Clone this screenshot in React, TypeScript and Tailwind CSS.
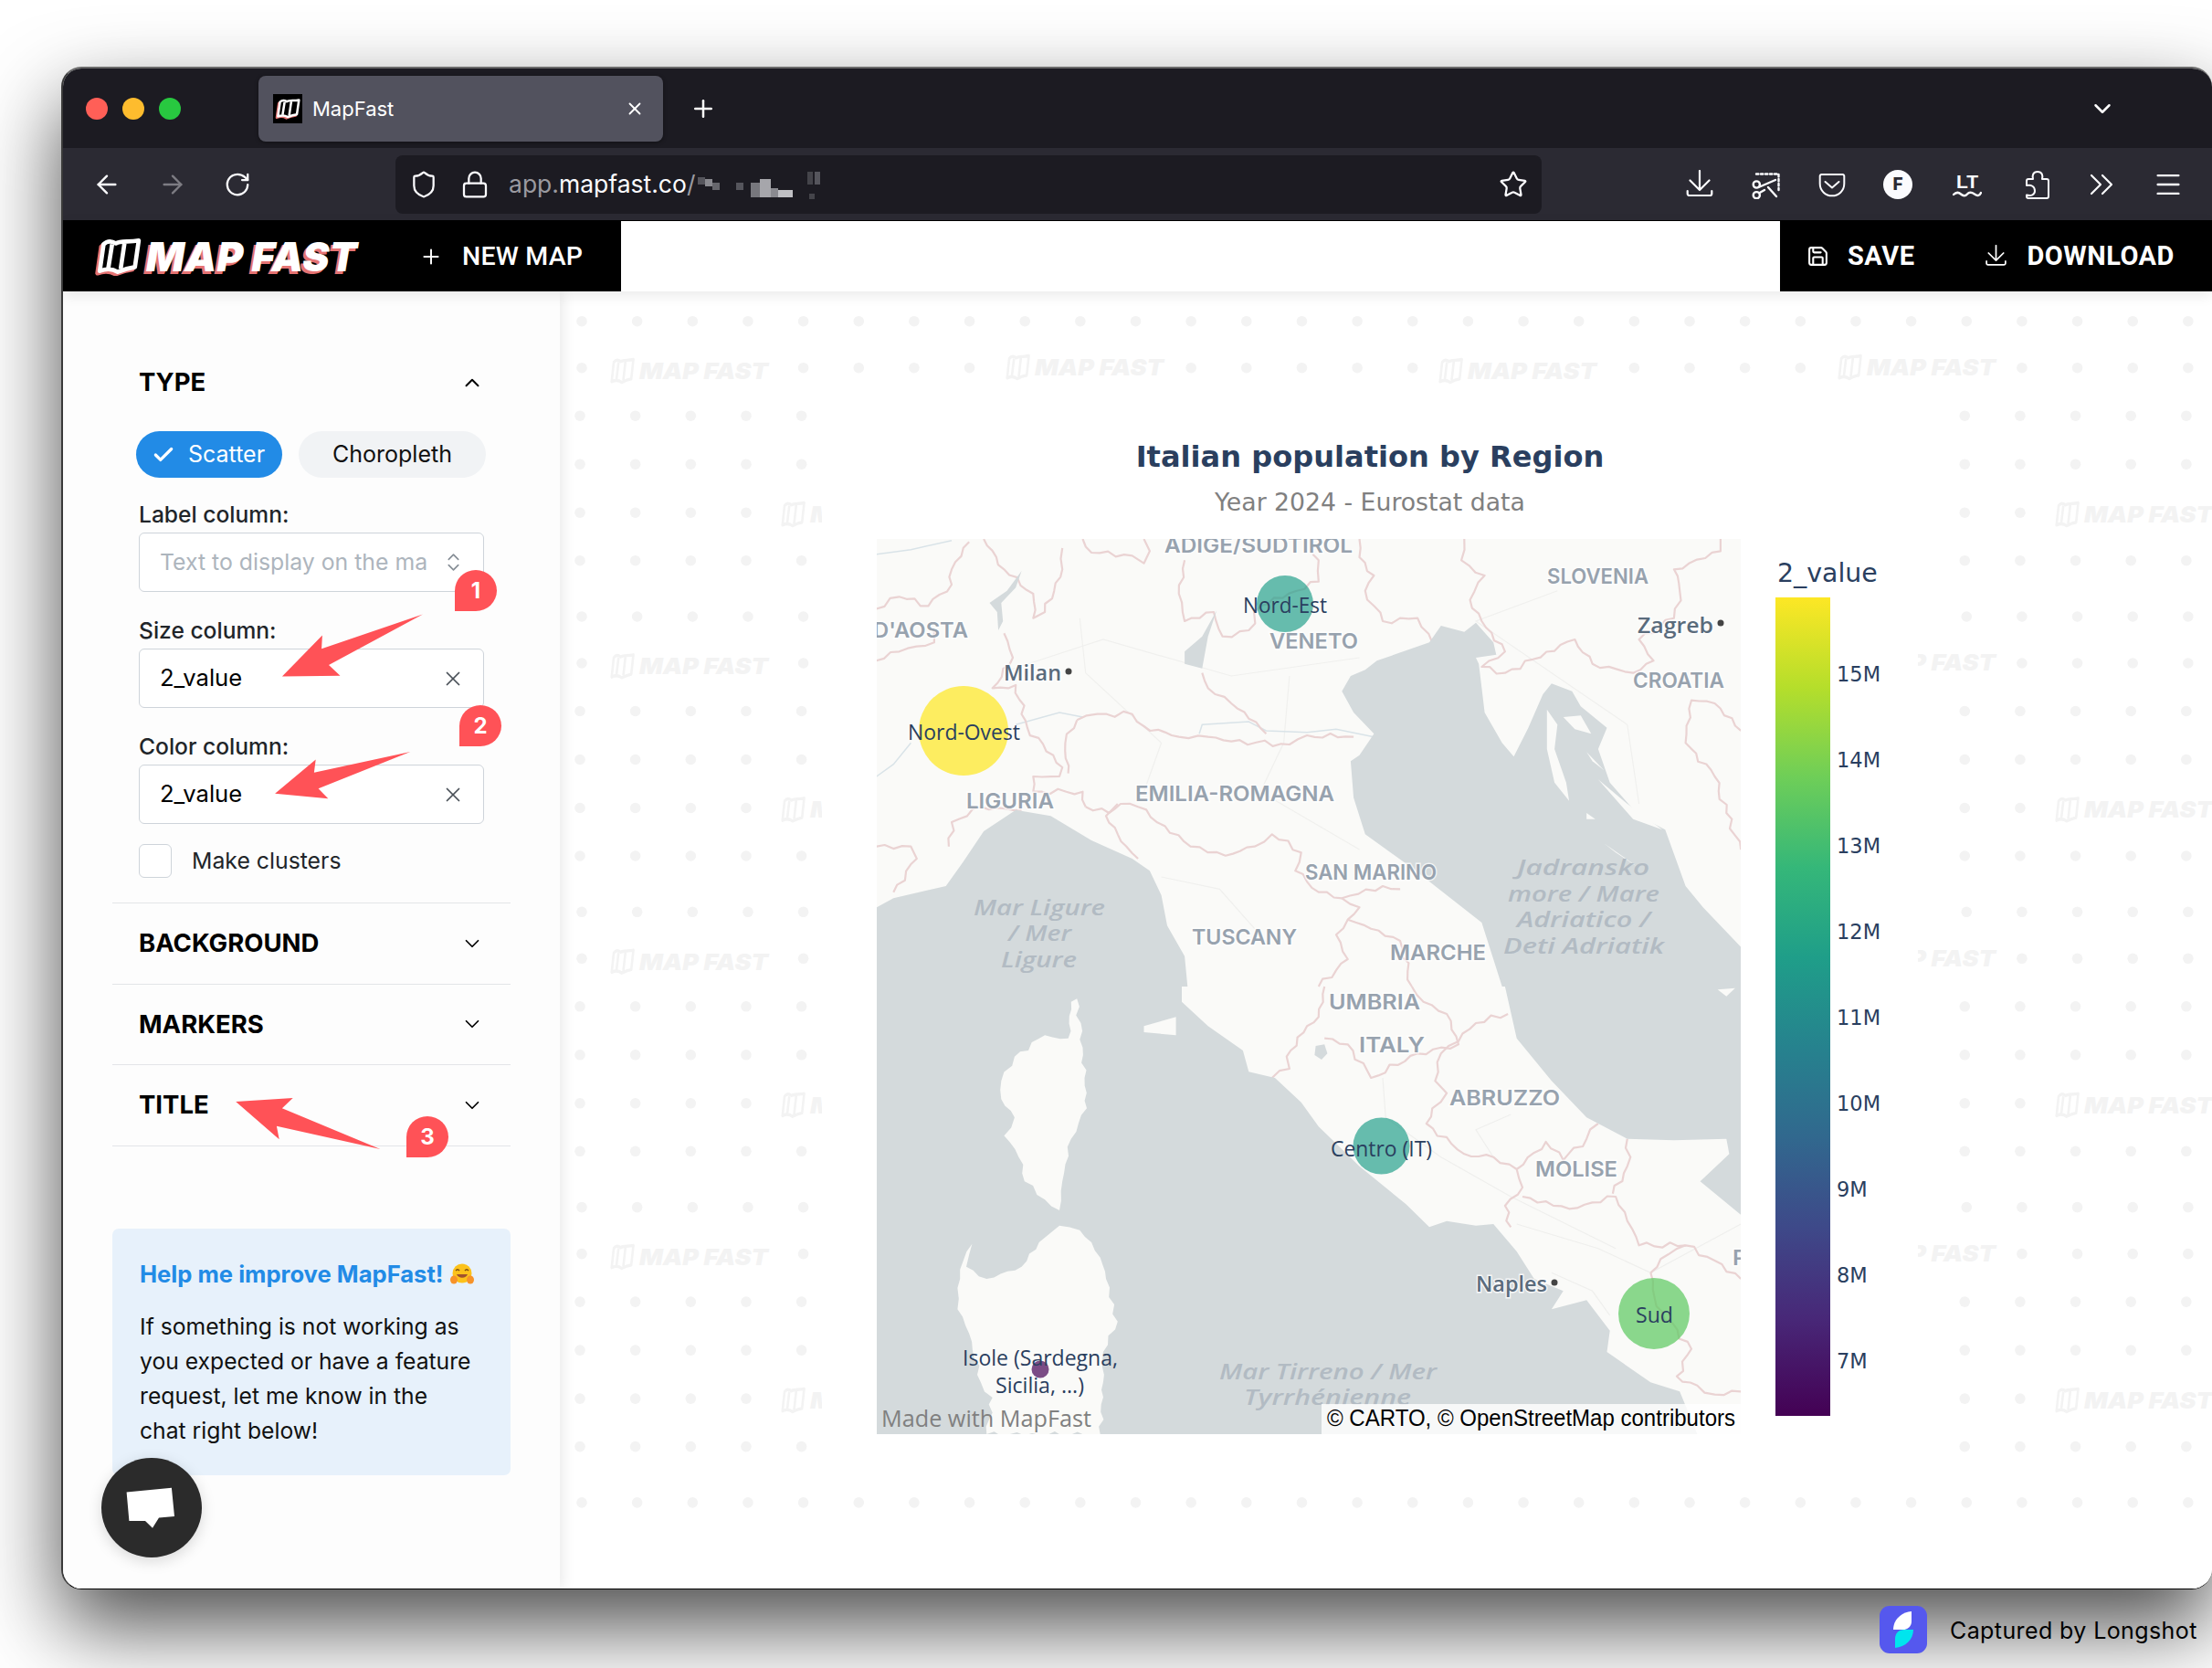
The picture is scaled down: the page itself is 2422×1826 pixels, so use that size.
import React from "react";
import { ArrowLeft, ArrowRight, RotateCw, Shield, Lock, Star, Menu, Plus, X, ChevronDown, ChevronUp, ChevronsUpDown, Check, Save } from "lucide-react";

const A5 = (pts: number[][]) => pts.map(([x, y]) => [940 + x / 1.568, 580 + y / 3]);
const A6 = (pts: number[][]) => pts.map(([x, y]) => [940 + x / 1.568, 1080 + y / 3]);
const S = (pts: number[][]) => pts.map(([x, y]) => `${x.toFixed(1)},${y.toFixed(1)}`).join(" ");
const P5 = (pts: number[][]) => S(A5(pts));
const P6 = (pts: number[][]) => S(A6(pts));
const Z3 = (pts: number[][]) => pts.map(([x, y]) => `${(60 + x / 2.8).toFixed(1)},${(380 + y / 2.529).toFixed(1)}`).join(" ");
const Z4 = (pts: number[][]) => pts.map(([x, y]) => `${(60 + x / 2.8).toFixed(1)},${(1000 + y / 2.063).toFixed(1)}`).join(" ");

// roughens a line: borders and island coasts on the base map are jagged
const jag = (pts: number[][], seed: number, amp = 1) => {
  const out: number[][] = [];
  pts.forEach((p, i) => {
    if (i === pts.length - 1) {
      out.push(p);
      return;
    }
    const q = pts[i + 1];
    const dx = q[0] - p[0];
    const dy = q[1] - p[1];
    const len = Math.hypot(dx, dy) || 1;
    const n = Math.max(1, Math.floor(len / 8));
    for (let k = 0; k < n; k++) {
      const t = k / n;
      const off = k === 0 ? 0 : amp * (2.4 * Math.sin(k * 2.3 + seed + i) + 1.1 * Math.cos(k * 4.7 + seed));
      out.push([p[0] + dx * t - (dy / len) * off, p[1] + dy * t + (dx / len) * off]);
    }
  });
  return S(out);
};

const adriatic =
  P5([[1000, 315], [980, 370], [890, 430], [870, 460], [845, 480], [830, 530], [850, 600], [885, 670], [860, 740], [845, 760], [850, 880], [870, 1000], [950, 1110], [1070, 1290], [1105, 1500]]) +
  " " +
  P6([[1110, 0], [1130, 170], [1190, 310], [1250, 430], [1320, 500], [1400, 505], [1490, 500], [1495, 550], [1445, 640], [1515, 750]]) +
  " " +
  P5([[1515, 1370], [1450, 1240], [1420, 1170], [1385, 985], [1340, 940], [1290, 830], [1270, 720], [1285, 650], [1240, 580], [1225, 530], [1190, 505], [1175, 540], [1150, 650], [1125, 745], [1105, 700], [1075, 600], [1070, 520], [1065, 440], [1060, 420], [1095, 410], [1090, 370], [1060, 305], [1040, 335]]);

const tyrrhenian =
  P5([[31, 1240], [60, 1210], [150, 1170], [180, 1090], [215, 990], [270, 920], [330, 940], [400, 1020], [470, 1080], [500, 1120], [520, 1200], [530, 1300], [560, 1400], [565, 1500]]) +
  " " +
  P6([[555, 0], [555, 50], [600, 130], [660, 210], [670, 280], [715, 300], [760, 380], [790, 460], [860, 590], [940, 715], [980, 790], [1010, 770], [1060, 785], [1090, 780], [1130, 870], [1160, 960], [1210, 1000], [1190, 1060], [1250, 1030], [1290, 1130], [1285, 1200], [1360, 1300], [1410, 1330], [1440, 1470], [31, 1470]]);

const islandPieces = [
  A6([[375, 40], [385, 200], [392, 400], [365, 500], [350, 640], [345, 735], [320, 700], [285, 640], [275, 560], [250, 490], [268, 430], [245, 370], [245, 310], [268, 230], [320, 160], [360, 170], [365, 50]]),
  A6([[345, 785], [380, 800], [400, 840], [415, 890], [425, 960], [430, 1020], [445, 1100], [420, 1200], [420, 1300], [415, 1470], [220, 1470], [230, 1350], [210, 1300], [190, 1140], [170, 1060], [170, 990], [180, 900], [195, 845], [190, 880], [185, 920], [220, 960], [280, 920], [310, 840]]),
];

const landPieces = [
  P6([[490, 130], [545, 100], [545, 160], [490, 150]]),
  P6([[1475, 10], [1505, 5], [1490, 32]]),
  P5([[1182, 590], [1200, 640], [1195, 720], [1215, 830], [1220, 890], [1195, 830], [1182, 720]]),
  P5([[1210, 615], [1240, 610], [1258, 670], [1230, 655]]),
  P5([[1250, 730], [1280, 790], [1260, 760]]),
  P5([[1270, 820], [1320, 900], [1380, 985], [1330, 950]]),
  P5([[1280, 1030], [1340, 1110], [1300, 1060]]),
  P5([[1250, 930], [1265, 950], [1250, 950]]),
];

const lakes = [
  P5([[615, 265], [590, 350], [560, 400], [560, 440], [590, 455], [600, 350]]),
  P5([[280, 135], [255, 200], [225, 240], [238, 270], [240, 330], [248, 300], [245, 240], [270, 190]]),
  P6([[785, 195], [800, 190], [805, 220], [795, 240], [783, 225]]),
];

const borders5 = [
  [[385, 30], [400, 75], [470, 85], [490, 110], [500, 70], [490, 30]],
  [[560, 100], [550, 210], [560, 300], [610, 270], [625, 350], [670, 330], [690, 250], [790, 170], [790, 100], [780, 80]],
  [[860, 30], [860, 90], [885, 150], [870, 200], [900, 300], [960, 290], [985, 370]],
  [[1040, 30], [1035, 100], [1075, 150], [1050, 230], [1070, 300], [1110, 400], [1070, 450], [1110, 470], [1230, 360], [1260, 440], [1330, 470], [1365, 430], [1340, 360], [1400, 290], [1410, 200], [1400, 130], [1480, 70], [1480, 30]],
  [[1515, 660], [1470, 570], [1430, 560], [1420, 700], [1470, 810], [1490, 930], [1515, 1050]],
  [[215, 30], [250, 130], [300, 210], [300, 290], [320, 270], [350, 130], [350, 60]],
  [[30, 260], [70, 220], [120, 250], [160, 180], [160, 130], [190, 40]],
  [[30, 430], [70, 400], [130, 370], [130, 330]],
  [[250, 340], [265, 420], [230, 520], [270, 510], [290, 650], [350, 780], [345, 810], [300, 810], [300, 860], [385, 860], [390, 910]],
  [[375, 625], [410, 605], [470, 605], [490, 645], [550, 680], [600, 680], [640, 695], [740, 705], [770, 675], [850, 680]],
  [[375, 625], [355, 700], [360, 800]],
  [[590, 470], [600, 520], [640, 570], [670, 620], [700, 670]],
  [[390, 910], [430, 930], [450, 900], [480, 910], [570, 1040], [630, 1070], [680, 1040], [710, 1000], [760, 1060], [750, 1120], [790, 1190], [830, 1210], [900, 1170], [930, 1180]],
  [[830, 1210], [860, 1240], [840, 1280], [820, 1330], [840, 1410], [790, 1500]],
  [[840, 1280], [880, 1310], [930, 1350], [950, 1500]],
  [[30, 1040], [90, 1040], [100, 1080], [60, 1190]],
  [[155, 1040], [160, 960], [210, 910], [280, 920]],
  [[445, 900], [425, 940], [460, 1040], [480, 1080]],
];
const borders6 = [
  [[800, 0], [790, 100], [770, 130], [735, 230], [740, 270], [710, 300]],
  [[800, 170], [840, 190], [880, 300], [960, 220], [1000, 200], [1030, 190], [1010, 90], [970, 50], [950, 0]],
  [[1115, 90], [1060, 120], [1030, 180], [1000, 220], [990, 310], [1010, 350], [985, 400], [975, 450], [1040, 550], [1090, 560], [1130, 600], [1140, 660], [1110, 720], [1120, 790]],
  [[1140, 690], [1220, 730], [1300, 690], [1320, 770], [1340, 850], [1420, 850], [1470, 900], [1515, 960]],
  [[1130, 600], [1180, 510], [1210, 570], [1250, 500], [1270, 450]],
  [[1320, 500], [1320, 590], [1295, 680]],
  [[1360, 940], [1390, 880], [1420, 850]],
  [[1360, 940], [1370, 1050], [1430, 1190], [1405, 1280], [1440, 1310], [1470, 1340], [1515, 1330]],
];
const rivers5 = [
  [[31, 810], [60, 770], [90, 700]],
  [[270, 640], [345, 600], [385, 615]],
  [[585, 670], [590, 640], [670, 630], [700, 660], [770, 665], [820, 655], [885, 680]],
  [[31, 80], [90, 65], [160, 35]],
];
const roads5 = [
  [[380, 290], [390, 470], [520, 700], [490, 860]],
  [[260, 460], [420, 360], [640, 480], [860, 420]],
  [[740, 480], [730, 700], [690, 860], [860, 1050]],
  [[1200, 200], [1060, 300], [1320, 640], [1340, 900]],
  [[520, 1140], [620, 1180], [680, 1310]],
];
const roads6 = [
  [[900, 300], [905, 430], [1000, 560], [1120, 690], [1300, 860]],
  [[1120, 420], [1060, 470], [1090, 560]],
  [[1130, 780], [1270, 860], [1360, 940], [1515, 780]],
  [[1190, 940], [1260, 1000], [1290, 1080]],
];

type L = { t: string; a: number; b: number; y: number };
const regions: L[] = [
  { t: "ADIGE/SUDTIROL", a: 1275, b: 1481, y: 597 },
  { t: "SLOVENIA", a: 1694, b: 1805, y: 631 },
  { t: "D'AOSTA", a: 956, b: 1060, y: 690 },
  { t: "VENETO", a: 1390, b: 1487, y: 702 },
  { t: "CROATIA", a: 1788, b: 1888, y: 745 },
  { t: "LIGURIA", a: 1058, b: 1154, y: 877 },
  { t: "EMILIA-ROMAGNA", a: 1243, b: 1461, y: 869 },
  { t: "SAN MARINO", a: 1429, b: 1573, y: 955 },
  { t: "TUSCANY", a: 1305, b: 1420, y: 1026 },
  { t: "MARCHE", a: 1522, b: 1627, y: 1043 },
  { t: "UMBRIA", a: 1455, b: 1555, y: 1097 },
  { t: "ITALY", a: 1488, b: 1560, y: 1144 },
  { t: "ABRUZZO", a: 1587, b: 1708, y: 1202 },
  { t: "MOLISE", a: 1681, b: 1771, y: 1280 },
  { t: "P", a: 1897, b: 1913, y: 1377 },
];
const waters: L[] = [
  { t: "Jadransko", a: 1661, b: 1806, y: 948 },
  { t: "more / Mare", a: 1651, b: 1817, y: 977 },
  { t: "Adriatico /", a: 1661, b: 1807, y: 1005 },
  { t: "Deti Adriatik", a: 1646, b: 1822, y: 1034 },
  { t: "Mar Ligure", a: 1066, b: 1210, y: 992 },
  { t: "/ Mer", a: 1104, b: 1173, y: 1020 },
  { t: "Ligure", a: 1096, b: 1179, y: 1049 },
  { t: "Mar Tirreno / Mer", a: 1335, b: 1573, y: 1500 },
  { t: "Tyrrhénienne", a: 1362, b: 1545, y: 1528 },
];
const cities: L[] = [
  { t: "Zagreb", a: 1793, b: 1876, y: 683 },
  { t: "Milan", a: 1099, b: 1162, y: 735 },
  { t: "Naples", a: 1616, b: 1694, y: 1404 },
];
const points: L[] = [
  { t: "Nord-Est", a: 1361, b: 1453, y: 661 },
  { t: "Nord-Ovest", a: 994, b: 1117, y: 800 },
  { t: "Centro (IT)", a: 1457, b: 1568, y: 1256 },
  { t: "Sud", a: 1791, b: 1832, y: 1438 },
  { t: "Isole (Sardegna,", a: 1054, b: 1224, y: 1485 },
  { t: "Sicilia, ...)", a: 1090, b: 1187, y: 1515 },
];

function MapMark({ color, gap }: { color: string; gap: string }) {
  return (
    <>
      <path d="M7 6 C11 2 15 2 20 5 C25 2 33 4 44 2 L40 30 C33 31 27 33 22 35 C17 32 11 31 3 34 Z" fill={gap} stroke={color} strokeWidth="4.5" strokeLinejoin="round" />
      <path d="M16 6 L12 31 M29 5 L25 32" stroke={color} strokeWidth="4.5" fill="none" />
    </>
  );
}

function LogoIcon({ className }: { className: string }) {
  return (
    <svg viewBox="-3 -1 50 40" className={className}>
      <g transform="translate(-2.5 2.5)">
        <MapMark color="#e57373" gap="none" />
      </g>
      <MapMark color="#ffffff" gap="#000000" />
    </svg>
  );
}

function Watermark({ x, y }: { x: number; y: number }) {
  return (
    <g transform={`translate(${x} ${y})`}>
      <g transform="translate(0 -14) scale(0.58 0.76)">
        <MapMark color="#f3f3f3" gap="#ffffff" />
      </g>
      <text x="32" y="9" textLength="141" lengthAdjust="spacingAndGlyphs" fontSize="25" fontWeight="900" fontStyle="italic" fontFamily="Inter, sans-serif" fill="#f3f3f3">
        MAP FAST
      </text>
    </g>
  );
}

function Pattern() {
  const offsets: [number, number][] = [[0, 637], [51, 637], [103.5, 635], [156.5, 635], [209.5, 635], [262, 635]];
  const dots: React.ReactNode[] = [];
  const marks: React.ReactNode[] = [];
  for (let k = 0; k <= 4; k++) {
    offsets.forEach(([dy, x0], ri) => {
      if (k === 4 && ri > 0) return;
      const logos = ri === 1 ? [668, 1101, 1575, 2012] : ri === 4 ? [855, 1553, 2250] : [];
      for (let n = 0; n < 30; n++) {
        const x = x0 + n * 60.65;
        if (logos.some((l) => x > l - 12 && x < l + 185)) continue;
        dots.push(<circle key={`${k}-${ri}-${n}`} cx={x} cy={351.7 + k * 323.3 + dy} r="5.8" fill="#f3f3f3" />);
      }
    });
    if (k < 4) {
      [668, 1101, 1575, 2012].forEach((l, i) => marks.push(<Watermark key={`a${k}${i}`} x={l} y={(i % 2 === 0 ? 406 : 402) + k * 323.3} />));
      [855, 1553, 2250].forEach((l, i) => marks.push(<Watermark key={`b${k}${i}`} x={l} y={563 + k * 323.3} />));
    }
  }
  return (
    <svg viewBox="613 319 1809 1421" className="absolute inset-0 h-[1421px] w-[1809px]">
      {dots}
      {marks}
    </svg>
  );
}

function ItalyMap() {
  const font = "Inter, sans-serif";
  return (
    <svg viewBox="960 590 946 980" className="h-[980px] w-[946px] shrink-0">
      <rect x="960" y="590" width="946" height="980" fill="#fafaf8" />
      {roads5.map((r, i) => <polyline key={i} points={P5(r)} fill="none" stroke="#f0f0ee" strokeWidth="1.2" />)}
      {roads6.map((r, i) => <polyline key={i} points={P6(r)} fill="none" stroke="#efefed" strokeWidth="1.2" />)}
      {rivers5.map((r, i) => <polyline key={i} points={P5(r)} fill="none" stroke="#d9e3e8" strokeWidth="1.5" />)}
      {borders5.map((r, i) => <polyline key={i} points={jag(A5(r), i)} fill="none" stroke="#ead3d3" strokeWidth="2.2" strokeLinejoin="round" />)}
      {borders6.map((r, i) => <polyline key={i} points={jag(A6(r), i + 20)} fill="none" stroke="#ead3d3" strokeWidth="2.2" strokeLinejoin="round" />)}
      <polygon points={adriatic} fill="#d4dadc" />
      <polygon points={tyrrhenian} fill="#d4dadc" />
      {islandPieces.map((p, i) => <polygon key={i} points={jag(p, i + 3, 0.9)} fill="#fafaf8" />)}
      {landPieces.map((p, i) => <polygon key={i} points={p} fill="#fafaf8" />)}
      {lakes.map((p, i) => <polygon key={i} points={p} fill="#d4dadc" />)}

      {regions.map((l) => (
        <text key={l.t} x={l.a} y={l.y} dominantBaseline="central" textLength={l.b - l.a} lengthAdjust="spacingAndGlyphs" fontFamily={font} fontWeight="600" fontSize="23" fill="#97a2ae" stroke="#ffffff" strokeWidth="3" strokeOpacity="0.7" paintOrder="stroke">
          {l.t}
        </text>
      ))}
      {waters.map((l) => (
        <text key={l.t} x={l.a} y={l.y} dominantBaseline="central" textLength={l.b - l.a} lengthAdjust="spacingAndGlyphs" fontFamily="'Open Sans', sans-serif" fontStyle="italic" fontWeight="600" fontSize="24" fill="#b2bbc3">
          {l.t}
        </text>
      ))}
      {cities.map((l) => (
        <text key={l.t} x={l.a} y={l.y} dominantBaseline="central" textLength={l.b - l.a} lengthAdjust="spacingAndGlyphs" fontFamily="'Open Sans', sans-serif" fontWeight="600" fontSize="24" fill="#5a6b7c" stroke="#ffffff" strokeWidth="3" strokeOpacity="0.8" paintOrder="stroke">
          {l.t}
        </text>
      ))}
      <circle cx="1884" cy="682" r="3.5" fill="#444" />
      <circle cx="1170" cy="735" r="3.5" fill="#444" />
      <circle cx="1702" cy="1404" r="3.5" fill="#444" />

      <circle cx="1055" cy="800" r="49" fill="#fde725" fillOpacity="0.72" />
      <circle cx="1407" cy="661" r="31" fill="#1f9e89" fillOpacity="0.68" />
      <circle cx="1512.5" cy="1254.5" r="31" fill="#1f9e89" fillOpacity="0.68" />
      <circle cx="1811" cy="1438" r="39" fill="#5ec962" fillOpacity="0.72" />
      <circle cx="1139" cy="1499" r="9.5" fill="#440154" fillOpacity="0.7" />

      {points.map((l) => (
        <text key={l.t} x={l.a} y={l.y} dominantBaseline="central" textLength={l.b - l.a} lengthAdjust="spacingAndGlyphs" fontFamily="'Open Sans', sans-serif" fontSize="24" fill="#2a3f5f">
          {l.t}
        </text>
      ))}

      <text x="965" y="1552" dominantBaseline="central" textLength="230" lengthAdjust="spacingAndGlyphs" fontFamily="'Open Sans', sans-serif" fontSize="25" fill="#808080">
        Made with MapFast
      </text>
      <rect x="1447" y="1537" width="459" height="33" fill="#ffffff" fillOpacity="0.8" />
      <text x="1453" y="1552" dominantBaseline="central" textLength="447" lengthAdjust="spacingAndGlyphs" fontFamily="'Liberation Sans', sans-serif" fontSize="25" fill="#000000">
        © CARTO, © OpenStreetMap contributors
      </text>
    </svg>
  );
}

function DownloadIcon({ className }: { className: string }) {
  return (
    <svg viewBox="0 0 32 32" className={className} fill="none" stroke="currentColor" strokeWidth="2.2" strokeLinecap="round" strokeLinejoin="round">
      <path d="M16 1V21 M5.5 11.5L16 22L26.500 11.5 M2.7 23V26a2 2 0 0 0 2 2H27.300a2 2 0 0 0 2-2V23" />
    </svg>
  );
}

function Section({ title }: { title: string }) {
  return (
    <div className="flex h-[88.5px] items-center justify-between border-b border-[#e3e5e8] pl-[29px] pr-[29px]">
      <span className="text-[27.5px] font-bold text-black">{title}</span>
      <ChevronDown className="h-[26px] w-[26px] text-black" strokeWidth={1.6} />
    </div>
  );
}

function Field({ label, value, first }: { label: string; value?: string; first?: boolean }) {
  return (
    <div className={first ? "mt-[21px]" : "mt-[23px]"}>
      <div className="text-[24.6px] font-medium leading-[39px] text-[#212529]">{label}</div>
      <div className="flex h-[65px] w-[378px] items-center justify-between rounded-[6px] border border-[#ced4da] bg-white pl-[22px] pr-[20px]">
        {value ? (
          <>
            <span className="text-[25.6px] text-black">{value}</span>
            <X className="h-[26px] w-[26px] text-[#495057]" strokeWidth={1.6} />
          </>
        ) : (
          <>
            <span className="w-[294px] overflow-hidden whitespace-nowrap text-[24.8px] text-[#adb5bd]">Text to display on the map</span>
            <ChevronsUpDown className="h-[25px] w-[25px] text-[#868e96]" strokeWidth={1.6} />
          </>
        )}
      </div>
    </div>
  );
}

function Badge({ n, className }: { n: string; className: string }) {
  return (
    <div className={`absolute z-30 flex h-[45px] w-[46px] items-center justify-center rounded-[50%_50%_50%_0] bg-[#ff5257] text-[24px] font-bold leading-none text-white ${className}`}>
      {n}
    </div>
  );
}

export default function App() {
  return (
    <div className="relative h-[1826px] w-[2422px] overflow-hidden bg-white font-['Inter',sans-serif]">
      {/* window */}
      <div className="absolute left-[67px] top-[73px] flex h-[1667px] w-[2355px] flex-col overflow-hidden rounded-[22px] border-b border-l-2 border-t-2 border-b-black border-l-[#3a3a3a] border-t-[#6a6a6a] bg-white shadow-[0_40px_90px_rgba(0,0,0,0.7)]">
        {/* tab strip */}
        <div className="flex h-[87px] shrink-0 items-center bg-[#1c1b22] pl-[25px] text-white">
          <div className="flex gap-[16px]">
            <span className="h-[24px] w-[24px] rounded-full bg-[#ff5f57]" />
            <span className="h-[24px] w-[24px] rounded-full bg-[#febc2e]" />
            <span className="h-[24px] w-[24px] rounded-full bg-[#28c840]" />
          </div>
          <div className="ml-[85px] flex h-[72px] w-[443px] items-center rounded-[8px] bg-[#52525e] pl-[16px] pr-[20px] shadow-[0_1px_4px_rgba(0,0,0,0.4)]">
            <div className="flex h-[32px] w-[32px] items-center justify-center bg-black">
              <LogoIcon className="h-[24px] w-[28px]" />
            </div>
            <span className="ml-[11px] mt-[2px] text-[22px]">MapFast</span>
            <X className="ml-auto h-[22px] w-[22px]" strokeWidth={2} />
          </div>
          <Plus className="ml-[29px] h-[30px] w-[30px]" strokeWidth={2} />
          <ChevronDown className="ml-auto mr-[105px] h-[30px] w-[30px]" strokeWidth={2} />
        </div>
        {/* toolbar */}
        <div className="flex h-[80px] shrink-0 items-center border-b border-black bg-[#2b2a33] pl-[32px] text-[#fbfbfe]">
          <ArrowLeft className="h-[32px] w-[32px]" strokeWidth={1.8} />
          <ArrowRight className="ml-[40px] h-[32px] w-[32px] text-[#7d7c83]" strokeWidth={1.8} />
          <RotateCw className="ml-[40px] h-[30px] w-[30px]" strokeWidth={1.8} />
          <div className="ml-[158px] flex h-[64px] w-[1255px] items-center rounded-[8px] bg-[#1c1b22] pl-[15px] pr-[15px]">
            <Shield className="h-[32px] w-[32px]" strokeWidth={1.7} />
            <Lock className="ml-[24px] h-[32px] w-[32px]" strokeWidth={1.7} />
            <span className="ml-[21px] text-[26.5px] text-[#fbfbfe]">
              <span className="text-[#9a9aa0]">app.</span>mapfast.co<span className="text-[#9a9aa0]">/</span>
            </span>
            <svg viewBox="0 0 140 32" className="ml-[1px] h-[32px] w-[140px]">
              <rect x="2" y="8" width="8" height="8" fill="#55555c" />
              <rect x="10" y="10" width="8" height="8" fill="#8a8a90" />
              <rect x="18" y="14" width="8" height="8" fill="#66666c" />
              <rect x="44" y="14" width="8" height="8" fill="#55555c" />
              <rect x="60" y="14" width="10" height="16" fill="#77777d" />
              <rect x="70" y="10" width="12" height="20" fill="#a6a6ab" />
              <rect x="82" y="20" width="8" height="10" fill="#8a8a90" />
              <rect x="90" y="22" width="16" height="8" fill="#c0c0c4" />
              <rect x="122" y="2" width="6" height="14" fill="#44444a" />
              <rect x="130" y="2" width="6" height="14" fill="#55555c" />
              <rect x="124" y="26" width="6" height="6" fill="#44444a" />
            </svg>
            <Star className="ml-auto h-[32px] w-[32px]" strokeWidth={1.7} />
          </div>
          <DownloadIcon className="ml-[157px] h-[32px] w-[32px]" />
          <svg viewBox="0 0 32 32" className="ml-[41px] h-[32px] w-[32px]" fill="none" stroke="currentColor" strokeWidth="2.4" strokeLinecap="round">
            <path d="M5 4.500H29.500V22" strokeDasharray="2.4 2.6" />
            <circle cx="5.300" cy="16" r="3.6" />
            <circle cx="5.300" cy="27.700" r="3.6" />
            <path d="M8.700 18.500L26 11 M8.700 25L14 22 M18 19L27 29" />
          </svg>
          <svg viewBox="0 0 32 32" className="ml-[40px] h-[32px] w-[32px]" fill="none" stroke="currentColor" strokeWidth="2" strokeLinecap="round" strokeLinejoin="round">
            <path d="M4.500 5H27.500A2 2 0 0 1 29.300 7V15C29.300 23 23 28.300 16 28.300C9 28.300 2.700 23 2.700 15V7A2 2 0 0 1 4.500 5Z M8.500 13L16 19.500L23.500 13" />
          </svg>
          <div className="ml-[40px] flex h-[32px] w-[32px] items-center justify-center rounded-full bg-[#fbfbfe] text-[19px] font-extrabold leading-none text-[#2b2a33]">F</div>
          <svg viewBox="0 0 32 32" className="ml-[44px] h-[32px] w-[32px]">
            <text x="16" y="20" textAnchor="middle" fontFamily="'Liberation Sans', sans-serif" fontWeight="700" fontSize="21" fill="currentColor">LT</text>
            <path d="M1 27Q5 23 9 26.500T16 26.500T24 26.500T31 25" fill="none" stroke="currentColor" strokeWidth="2.4" strokeLinecap="round" />
          </svg>
          <svg viewBox="0 0 32 32" className="ml-[45px] h-[32px] w-[32px]" fill="none" stroke="currentColor" strokeWidth="2" strokeLinejoin="round">
            <path d="M6 31H26a2 2 0 0 0 2-2V12a2 2 0 0 0-2-2H21C22 6 21 2 16 2C11 2 10 6 11 10H6a2 2 0 0 0-2 2V17C9 16 13 18 13 23C13 27 9 29 4 27.500V29a2 2 0 0 0 2 2Z" />
          </svg>
          <svg viewBox="0 0 32 32" className="ml-[39px] h-[32px] w-[32px]" fill="none" stroke="currentColor" strokeWidth="2.2" strokeLinecap="round" strokeLinejoin="round">
            <path d="M4 6L14 16L4 26 M16 6L26 16L16 26" />
          </svg>
          <Menu className="ml-[39px] h-[34px] w-[34px]" strokeWidth={1.7} />
        </div>
        {/* app header */}
        <div className="relative z-20 flex h-[77px] shrink-0 bg-white shadow-[0_4px_14px_rgba(0,0,0,0.09)]">
          <div className="flex w-[611px] items-center bg-black pl-[34px] text-white">
            <LogoIcon className="h-[42px] w-[52px]" />
            <span className="ml-[5px] w-[240px] whitespace-nowrap text-[44px] font-black italic leading-none tracking-[0.2px] [text-shadow:-3px_3px_0_#e57373]">MAP FAST</span>
            <Plus className="ml-[59px] h-[26px] w-[26px]" strokeWidth={1.8} />
            <span className="ml-[21px] mt-[1px] whitespace-nowrap font-['Roboto',sans-serif] text-[28.5px] font-medium tracking-[0.2px]">NEW MAP</span>
          </div>
          <div className="flex-1" />
          <div className="flex w-[473px] items-center bg-black pl-[29px] font-['Roboto',sans-serif] text-[29px] font-bold tracking-[0.5px] text-white">
            <Save className="h-[25px] w-[25px]" strokeWidth={2} />
            <span className="ml-[20px] mt-[1px]">SAVE</span>
            <DownloadIcon className="ml-[77px] h-[25px] w-[25px]" />
            <span className="ml-[21px] mt-[1px]">DOWNLOAD</span>
          </div>
        </div>
        {/* body */}
        <div className="flex min-h-0 flex-1">
          <aside className="relative z-10 w-[544px] shrink-0 bg-[#fdfdfd] px-[54px] pt-[56px] shadow-[3px_0_14px_rgba(0,0,0,0.09)]">
            <div className="pl-[29px] pr-[29px]">
              <div className="flex h-[88px] items-center justify-between">
                <span className="text-[27.5px] font-bold text-black">TYPE</span>
                <ChevronUp className="h-[26px] w-[26px] text-black" strokeWidth={1.8} />
              </div>
              <div className="-ml-[3px] mt-[9px] flex gap-[18px]">
                <div className="flex h-[51px] w-[160px] shrink-0 items-center rounded-full bg-[#228be6] pl-[17px] text-[25px] text-white">
                  <Check className="h-[26px] w-[26px]" strokeWidth={3} />
                  <span className="ml-[14px]">Scatter</span>
                </div>
                <div className="flex h-[51px] w-[205px] shrink-0 items-center justify-center rounded-full bg-[#f1f3f5] text-[25px] text-[#111]">Choropleth</div>
              </div>
              <Field first label="Label column:" />
              <Field label="Size column:" value="2_value" />
              <Field label="Color column:" value="2_value" />
              <div className="mt-[22px] flex items-center">
                <div className="h-[37px] w-[36px] rounded-[6px] border border-[#ced4da] bg-white" />
                <span className="ml-[22px] text-[24.8px] text-[#212529]">Make clusters</span>
              </div>
            </div>
            <div className="mt-[27px] border-t border-[#e3e5e8]">
              <Section title="BACKGROUND" />
              <Section title="MARKERS" />
              <Section title="TITLE" />
            </div>
            <div className="mt-[90px] h-[270px] rounded-[7px] bg-[#e7f1fb] pl-[30px] pt-[33px] text-[24.7px] leading-[38.2px] text-[#111]">
              <div className="flex items-center text-[25.6px] font-bold leading-[34px] text-[#228be6]">
                Help me improve MapFast!
                <svg viewBox="0 0 26 24" className="ml-[8px] h-[24px] w-[26px]">
                  <circle cx="13" cy="11" r="10.5" fill="#fcc21b" />
                  <path d="M7 12C9 17 17 17 19 12Z" fill="#a0522d" />
                  <path d="M6 8Q8 5.500 10 8 M16 8Q18 5.500 20 8" stroke="#7a4a12" strokeWidth="1.4" fill="none" />
                  <ellipse cx="4" cy="18" rx="4" ry="4.500" fill="#f79329" />
                  <ellipse cx="22" cy="18" rx="4" ry="4.500" fill="#f79329" />
                </svg>
              </div>
              <p className="mt-[21px] whitespace-nowrap">If something is not working as<br />you expected or have a feature<br />request, let me know in the<br />chat right below!</p>
            </div>
          </aside>
          <main className="relative min-w-0 flex-1 overflow-hidden bg-white">
            <Pattern />
            <div className="relative ml-[287px] mt-[111px] flex h-[1200px] w-[1200px] flex-col bg-white">
              <h1 className="mt-[49px] w-[1200px] text-center font-['DejaVu_Sans',sans-serif] text-[32.1px] font-bold leading-[42px] text-[#2a3f5f]">Italian population by Region</h1>
              <p className="mt-[9px] w-[1200px] text-center font-['DejaVu_Sans',sans-serif] text-[26.7px] leading-[40px] text-[#808080]">Year 2024 - Eurostat data</p>
              <div className="ml-[60px] mt-[20px] flex">
                <ItalyMap />
                <div className="ml-[38px] mt-[20px] font-['DejaVu_Sans',sans-serif] text-[#2a3f5f]">
                  <div className="ml-[2px] whitespace-nowrap text-[28.4px] leading-[36px]">2_value</div>
                  <div className="mt-[8px] flex h-[896px]">
                    <div className="h-full w-[60px] bg-[linear-gradient(to_bottom,#fde725_0%,#b5de2b_11%,#6ece58_22%,#35b779_33%,#1f9e89_44%,#26828e_55%,#31688e_66%,#3e4989_77%,#482878_88%,#440154_100%)]" />
                    <div className="ml-[7px] pt-[38px] text-[22.5px]">
                      {["15M", "14M", "13M", "12M", "11M", "10M", "9M", "8M", "7M"].map((t) => (
                        <div key={t} className="flex h-[94px] items-center">{t}</div>
                      ))}
                    </div>
                  </div>
                </div>
              </div>
            </div>
          </main>
        </div>
      </div>

      {/* chat */}
      <div className="absolute left-[111px] top-[1596px] z-30 flex h-[109px] w-[110px] items-center justify-center rounded-full bg-[#2b2b2b] shadow-[0_4px_16px_rgba(0,0,0,0.15)]">
        <svg viewBox="0 0 110 109" className="h-[109px] w-[110px]">
          <polygon points="27.6,37.5 76.9,32.700 80,64 63,65.600 56,76.800 48,69 30.400,69" fill="#ffffff" />
        </svg>
      </div>

      {/* annotations */}
      <svg viewBox="0 0 2422 1826" className="pointer-events-none absolute inset-0 z-30 h-[1826px] w-[2422px]">
        <polygon points={Z3([[697, 912], [820, 798], [818, 835], [1128, 740], [840, 880], [875, 910]])} fill="#ff5257" />
        <polygon points={Z3([[675, 1236], [800, 1142], [795, 1178], [1090, 1120], [808, 1222], [838, 1250]])} fill="#ff5257" />
        <polygon points={Z4([[555, 425], [730, 417], [697, 440], [998, 532], [680, 480], [688, 510]])} fill="#ff5257" />
      </svg>
      <Badge n="1" className="left-[498px] top-[624px]" />
      <Badge n="2" className="left-[503px] top-[772px]" />
      <Badge n="3" className="left-[445px] top-[1222px]" />

      {/* capture footer */}
      <div className="absolute left-[2058px] top-[1758px] flex items-center">
        <svg viewBox="0 0 52 52" className="h-[52px] w-[52px]">
          <rect width="52" height="52" rx="11" fill="#5558ee" />
          <path d="M35 6V17C35 22 31 26 26 26H15C15 15 24 7 35 6Z" fill="#ffffff" />
          <path d="M37 26C37 37 28 45 17 46V36C17 30 21 26 27 26Z" fill="#00e5ee" />
        </svg>
        <span className="ml-[25px] mt-[3px] whitespace-nowrap text-[25px] tracking-[0.4px] text-black">Captured by Longshot</span>
      </div>
    </div>
  );
}
